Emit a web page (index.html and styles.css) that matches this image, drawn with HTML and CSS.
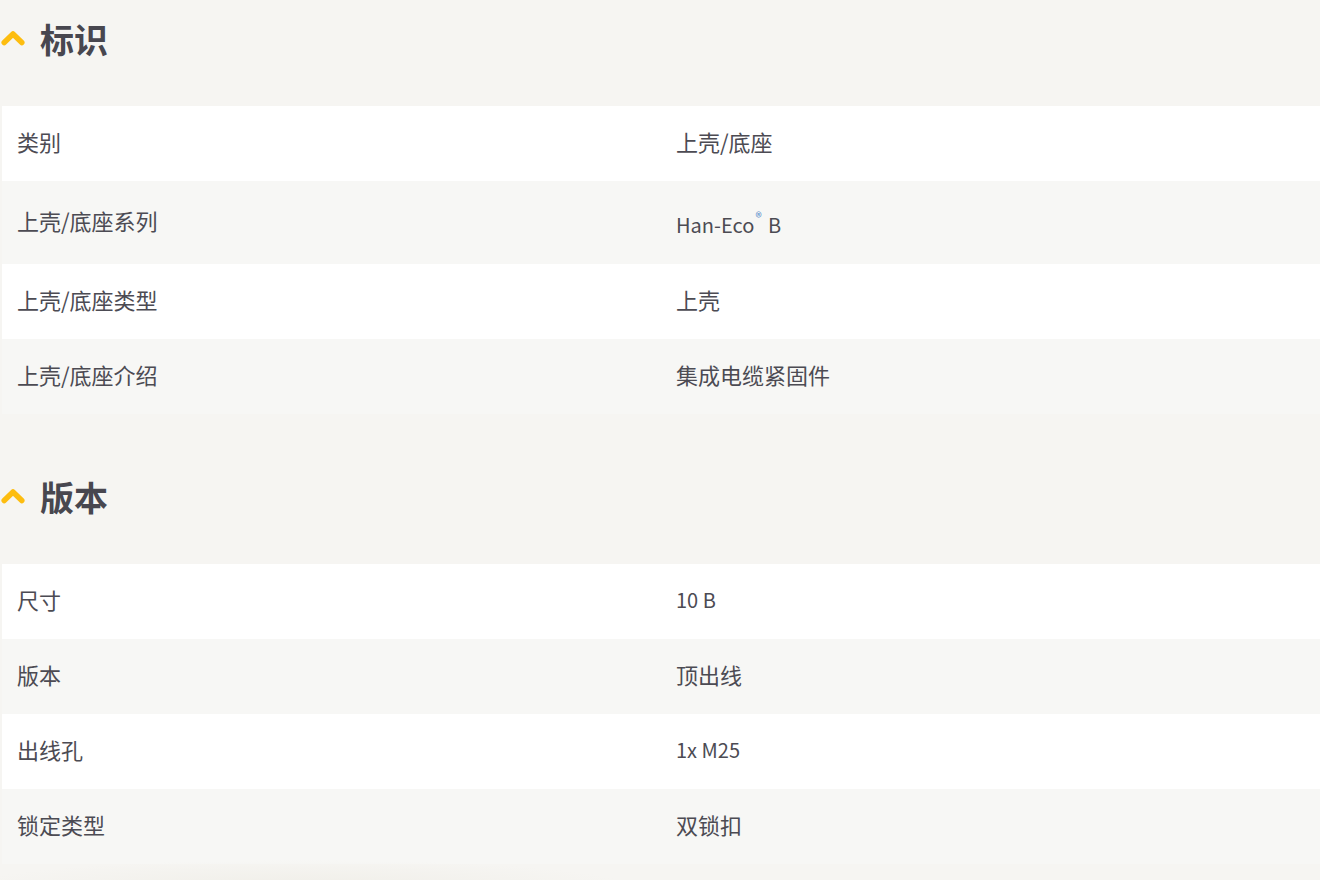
FILE: index.html
```html
<!DOCTYPE html>
<html lang="zh">
<head>
<meta charset="utf-8">
<title>标识 / 版本</title>
<link rel="stylesheet" href="styles.css">
</head>
<body>
<div class="page">
  <section class="section">
    <h2 class="section-title">
      <svg class="chev" width="24" height="16" viewBox="0 0 24 16"><path d="M3.2 12.5 L12 4 L20.8 12.5" fill="none" stroke="#fdbd10" stroke-width="5.5" stroke-linecap="round" stroke-linejoin="round"/></svg>
      <span>标识</span>
    </h2>
    <div class="table">
      <div class="row"><div class="cell">类别</div><div class="cell">上壳/底座</div></div>
      <div class="row"><div class="cell">上壳/底座系列</div><div class="cell latin">Han-Eco<sup class="reg">®</sup> B</div></div>
      <div class="row"><div class="cell">上壳/底座类型</div><div class="cell">上壳</div></div>
      <div class="row"><div class="cell">上壳/底座介绍</div><div class="cell">集成电缆紧固件</div></div>
    </div>
  </section>
  <section class="section">
    <h2 class="section-title">
      <svg class="chev" width="24" height="16" viewBox="0 0 24 16"><path d="M3.2 12.5 L12 4 L20.8 12.5" fill="none" stroke="#fdbd10" stroke-width="5.5" stroke-linecap="round" stroke-linejoin="round"/></svg>
      <span>版本</span>
    </h2>
    <div class="table">
      <div class="row"><div class="cell">尺寸</div><div class="cell latin">10 B</div></div>
      <div class="row"><div class="cell">版本</div><div class="cell">顶出线</div></div>
      <div class="row"><div class="cell">出线孔</div><div class="cell latin">1x M25</div></div>
      <div class="row"><div class="cell">锁定类型</div><div class="cell">双锁扣</div></div>
    </div>
  </section>
  <div class="fade"></div>
</div>
</body>
</html>
```
FILE: styles.css
```css
html, body {
  margin: 0;
  padding: 0;
  background: #f6f5f2;
}
body {
  font-family: "Noto Sans CJK SC", "Noto Sans", sans-serif;
  color: #4d4c54;
  overflow: hidden;
  height: 880px;
}
.page {
  position: relative;
  height: 880px;
}
.section + .section {
  margin-top: 44px;
}
.section-title {
  margin: 0;
  padding: 14px 0 42px 1px;
  height: 50px;
  display: flex;
  align-items: center;
  gap: 15px;
  font-size: 34px;
  font-weight: 700;
  line-height: 50px;
  color: #48474f;
}
.chev {
  display: block;
  margin-top: -2px;
}
.table {
  margin-left: 2px;
}
.row {
  display: flex;
  align-items: center;
  background: #ffffff;
}
.row:nth-child(even) {
  background: #f7f7f5;
}
.cell {
  flex: 1 1 50%;
  padding: 19px 15px 23px;
  font-size: 22px;
  line-height: 33px;
  color: #4c4b53;
}
.latin {
  font-size: 20px;
}
.reg {
  font-size: 13px;
  line-height: 33px;
  vertical-align: 11px;
  color: #5b8fca;
  margin-left: 1px;
  margin-right: 2px;
}
.fade {
  position: absolute;
  left: 0;
  bottom: 0;
  width: 620px;
  height: 22px;
  background: radial-gradient(ellipse 330px 26px at 300px 28px, rgba(236, 234, 226, 0.6), rgba(236, 234, 226, 0));
  pointer-events: none;
}
```
